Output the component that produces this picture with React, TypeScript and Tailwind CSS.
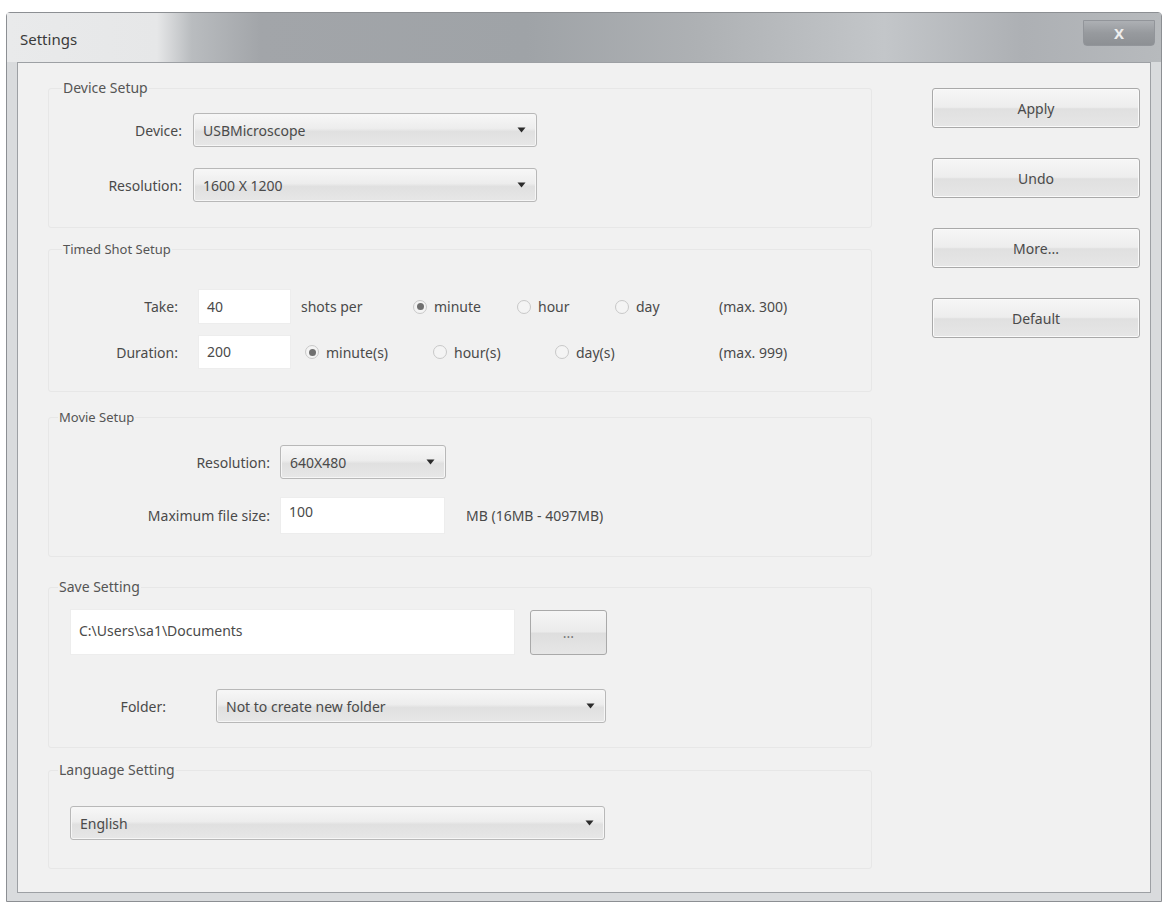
import React from "react";

const font = { fontFamily: '"Noto Sans", "Open Sans", Arial, sans-serif' };

function Arrow() {
  return (
    <svg width="9" height="6" viewBox="0 0 9 6" className="shrink-0">
      <path d="M0.5 0.5 H8.5 L4.5 5.5 Z" fill="#2b2b2b" />
    </svg>
  );
}

function Select({ value, className }: { value: string; className: string }) {
  return (
    <div
      className={`flex h-[34px] items-center justify-between rounded-[3px] border border-[#b8b8b8] bg-[linear-gradient(180deg,#f7f7f7_0%,#ededed_45%,#e0e0e0_55%,#e7e7e7_100%)] pl-[9px] pr-[10px] shadow-[inset_0_0_0_1px_#f6f6f6] ${className}`}
    >
      <span className="text-[14px] text-[#4a4a4a]">{value}</span>
      <Arrow />
    </div>
  );
}

function Input({ value, className }: { value: string; className: string }) {
  return (
    <div className={`border border-[#ededed] bg-white px-[8px] text-[14px] text-[#4a4a4a] ${className}`}>
      {value}
    </div>
  );
}

function Radio({ checked, label, className }: { checked?: boolean; label: string; className: string }) {
  return (
    <div className={`flex items-center gap-[7px] ${className}`}>
      <span className="flex h-[14px] w-[14px] items-center justify-center rounded-full border border-[#c8c8c8] bg-[#f4f4f4]">
        {checked && <span className="h-[7px] w-[7px] rounded-full bg-[#707070]" />}
      </span>
      <span>{label}</span>
    </div>
  );
}

function Group({
  title,
  children,
  className,
  legendClass,
}: {
  title: string;
  children: React.ReactNode;
  className: string;
  legendClass: string;
}) {
  return (
    <fieldset className={`w-[824px] rounded-[3px] border border-[#e7e7e7] ${className}`}>
      <legend className={`h-[20px] px-[1px] leading-[20px] text-[#555] ${legendClass}`}>{title}</legend>
      {children}
    </fieldset>
  );
}

function WinButton({ label }: { label: string }) {
  return (
    <div className="flex h-[40px] w-[208px] items-center justify-center rounded-[3px] border border-[#a9a9a9] bg-[linear-gradient(180deg,#f6f6f6_0%,#ededed_48%,#e0e0e0_52%,#e6e6e6_100%)] text-[14px] text-[#4a4a4a] shadow-[inset_0_0_0_1px_#fafafa]">
      {label}
    </div>
  );
}

export default function App() {
  return (
    <div className="h-[904px] w-[1168px] bg-white pl-[6px] pt-[12px]" style={font}>
      <div className="flex h-[890px] w-[1156px] flex-col rounded-t-[4px] border border-[#8c8f93] bg-[#d9dbdd]">
        {/* title bar */}
        <div className="flex h-[49px] items-start justify-between bg-[linear-gradient(90deg,#e9eaeb_0%,#e6e7e8_13%,#b9bcbf_16%,#a2a5a9_22%,#9fa3a7_45%,#aeb1b4_60%,#c3c6c9_76%,#adb0b4_88%,#b7babd_100%)]">
          <span className="pl-[13px] pt-[15px] text-[15px] text-[#3a3a3a]">Settings</span>
          <div className="mr-[6px] mt-[7px] flex h-[26px] w-[72px] items-center justify-center rounded-b-[4px] border border-[#92959a] bg-[linear-gradient(180deg,#adb0b4_0%,#979a9e_50%,#8d9094_100%)]">
            <span className="text-[15px] font-bold leading-none text-[#eeeeee]">X</span>
          </div>
        </div>
        {/* client */}
        <div className="mx-[10px] mb-[8px] flex flex-1 border border-[#9da0a4] bg-[#f1f1f1]">
          <div className="w-[900px] pl-[30px] pt-[15px]">
            <Group title="Device Setup" className="px-[13px] pb-[25px]" legendClass="text-[14px]">
              <div className="mt-[15px] flex items-center">
                <div className="w-[120px] text-right text-[14px] text-[#4a4a4a]">Device:</div>
                <Select value="USBMicroscope" className="ml-[11px] w-[344px]" />
              </div>
              <div className="mt-[21px] flex items-center">
                <div className="w-[120px] text-right text-[14px] text-[#4a4a4a]">Resolution:</div>
                <Select value="1600 X 1200" className="ml-[11px] w-[344px]" />
              </div>
            </Group>

            <Group title="Timed Shot Setup" className="mt-[11px] px-[13px] pb-[22px]" legendClass="text-[13px]">
              <div className="mt-[30px] flex items-center text-[14px] text-[#4a4a4a]">
                <div className="w-[116px] text-right">Take:</div>
                <Input value="40" className="ml-[20px] h-[35px] w-[93px] pt-[6px]" />
                <span className="ml-[10px] w-[112px]">shots per</span>
                <Radio checked label="minute" className="w-[104px]" />
                <Radio label="hour" className="w-[98px]" />
                <Radio label="day" className="w-[104px]" />
                <span>(max. 300)</span>
              </div>
              <div className="mt-[11px] flex items-center text-[14px] text-[#4a4a4a]">
                <div className="w-[116px] text-right">Duration:</div>
                <Input value="200" className="ml-[20px] h-[34px] w-[93px] pt-[5px]" />
                <Radio checked label="minute(s)" className="ml-[14px] w-[128px]" />
                <Radio label="hour(s)" className="w-[122px]" />
                <Radio label="day(s)" className="w-[164px]" />
                <span>(max. 999)</span>
              </div>
            </Group>

            <Group title="Movie Setup" className="mt-[15px] px-[9px] pb-[22px]" legendClass="text-[13px]">
              <div className="mt-[18px] flex items-center">
                <div className="w-[212px] text-right text-[14px] text-[#4a4a4a]">Resolution:</div>
                <Select value="640X480" className="ml-[10px] w-[166px]" />
              </div>
              <div className="mt-[18px] flex items-center text-[14px] text-[#4a4a4a]">
                <div className="w-[212px] text-right">Maximum file size:</div>
                <Input value="100" className="ml-[10px] h-[37px] w-[165px] pt-[3px]" />
                <span className="ml-[21px]">MB (16MB - 4097MB)</span>
              </div>
            </Group>

            <Group title="Save Setting" className="mt-[20px] px-[9px] pb-[24px]" legendClass="text-[14px]">
              <div className="mt-[12px] flex items-center">
                <Input value="C:\Users\sa1\Documents" className="ml-[12px] h-[46px] w-[445px] pt-[10px]" />
                <div className="ml-[15px] flex h-[45px] w-[77px] items-center justify-center rounded-[3px] border border-[#a9a9a9] bg-[linear-gradient(180deg,#f5f5f5_0%,#ebebeb_48%,#dedede_52%,#e6e6e6_100%)] text-[14px] text-[#777]">
                  ...
                </div>
              </div>
              <div className="mt-[34px] flex items-center">
                <div className="w-[108px] text-right text-[14px] text-[#4a4a4a]">Folder:</div>
                <Select value="Not to create new folder" className="ml-[50px] w-[390px]" />
              </div>
            </Group>

            <Group title="Language Setting" className="mt-[12px] px-[9px] pb-[28px]" legendClass="text-[14px]">
              <div className="mt-[26px] flex items-center">
                <Select value="English" className="ml-[12px] w-[535px]" />
              </div>
            </Group>
          </div>

          <div className="ml-[14px] flex flex-col gap-[30px] pt-[25px]">
            <WinButton label="Apply" />
            <WinButton label="Undo" />
            <WinButton label="More..." />
            <WinButton label="Default" />
          </div>
        </div>
      </div>
    </div>
  );
}
